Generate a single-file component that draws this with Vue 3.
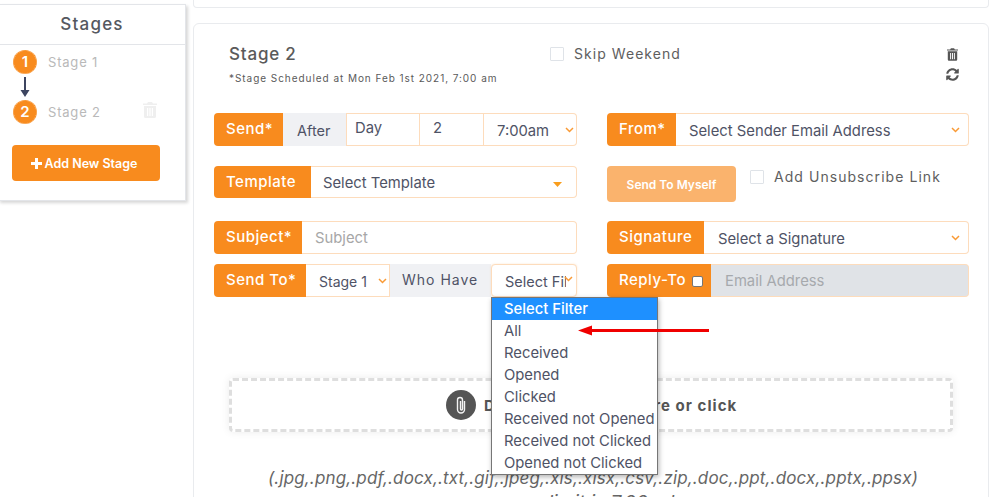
<script setup>
const options = ['Select Filter', 'All', 'Received', 'Opened', 'Clicked', 'Received not Opened', 'Received not Clicked', 'Opened not Clicked']
</script>

<template>
  <div class="page">
    <aside class="sidebar">
      <h2 class="side-title">Stages</h2>
      <div class="stage-list">
        <div class="stage-row">
          <span class="badge">1</span>
          <span class="stage-name">Stage 1</span>
        </div>
        <svg class="down" width="10" height="20" viewBox="0 0 10 20"><path d="M4 0h2v13h3.5L5 20 .5 13H4z" fill="#3d4560"/></svg>
        <div class="stage-row">
          <span class="badge">2</span>
          <span class="stage-name">Stage 2</span>
          <svg class="side-trash" width="14" height="16" viewBox="0 0 14 16"><path d="M5 0h4l1 1.5h4V3H0V1.5h4zM1 4h12v10.5a1.5 1.5 0 0 1-1.5 1.5h-9A1.5 1.5 0 0 1 1 14.500zM4 6v8h1.200V6zm2.400 0v8h1.200V6zm2.400 0v8H10V6z" fill="#efefef" fill-rule="evenodd"/></svg>
        </div>
        <button class="add-btn">
          <svg width="11" height="11" viewBox="0 0 11 11"><path d="M4 0h3v4h4v3H7v4H4V7H0V4h4z" fill="#fff"/></svg>
          Add New Stage
        </button>
      </div>
    </aside>

    <main class="content">
      <div class="top-card"></div>
      <section class="card">
        <header class="card-head">
          <div class="head-left">
            <h3 class="stage-title">Stage 2</h3>
            <p class="schedule">*Stage Scheduled at Mon Feb 1st 2021, 7:00 am</p>
          </div>
          <label class="check skip"><span class="box"></span>Skip Weekend</label>
          <div class="head-icons">
            <svg width="11" height="13" viewBox="0 0 14 16"><path d="M5 0h4l1 1.500h4V3H0V1.500h4zM1 4h12v10.500a1.500 1.500 0 0 1-1.500 1.500h-9A1.500 1.500 0 0 1 1 14.500zM4 6v8h1.200V6zm2.400 0v8h1.200V6zm2.400 0v8H10V6z" fill="#555" fill-rule="evenodd"/></svg>
            <svg width="13" height="13" viewBox="0 0 512 512"><path fill="#555" d="M370.700 133.300C339.500 104 298.900 88 255.800 88c-77.500.1-144.300 53.200-162.800 126.900-1.300 5.400-6.100 9.100-11.600 9.100H24.100c-7.500 0-13.200-6.800-11.800-14.200C33.900 94.900 134.800 8 256 8c66.500 0 126.800 26.200 171.300 68.700L463 41c15.100-15.100 41-4.400 41 17v134c0 13.300-10.700 24-24 24H346c-21.400 0-32.100-25.900-17-41zM32 296h134c21.400 0 32.100 25.900 17 41l-41.700 41.700c31.200 29.300 71.800 45.300 114.900 45.300 77.400-.1 144.300-53.100 162.800-126.800 1.300-5.400 6.100-9.100 11.600-9.100h57.300c7.500 0 13.200 6.800 11.800 14.200C478.100 417.100 377.200 504 256 504c-66.500 0-126.800-26.200-171.300-68.700L49 471c-15.100 15.100-41 4.400-41-17V320c0-13.300 10.700-24 24-24z"/></svg>
          </div>
        </header>

        <div class="form">
          <div class="col">
            <div class="group row-a">
              <span class="label w-send">Send*</span>
              <span class="addon after">After</span>
              <span class="field day">Day</span>
              <span class="field num">2</span>
              <span class="field time">7:00am<svg class="chev" width="9" height="6" viewBox="0 0 9 6"><path d="M1 1l3.500 3.500L8 1" fill="none" stroke="#f99a35" stroke-width="1.500"/></svg></span>
            </div>
            <div class="group row-b short">
              <span class="label w-template">Template</span>
              <span class="field grow pad-12">Select Template<svg class="caret" width="9" height="5" viewBox="0 0 9 5"><path d="M0 0h9L4.500 5z" fill="#f99d1c"/></svg></span>
            </div>
            <div class="group row-c">
              <span class="label w-subject">Subject*</span>
              <span class="field grow placeholder pad-13">Subject</span>
            </div>
            <div class="group row-d">
              <span class="label w-sendto">Send To*</span>
              <span class="field stage-sel">Stage 1<svg class="chev" width="9" height="6" viewBox="0 0 9 6"><path d="M1 1l3.500 3.500L8 1" fill="none" stroke="#f99a35" stroke-width="1.500"/></svg></span>
              <span class="addon who">Who Have</span>
              <div class="filter">
                <span class="filter-text">Select Fil</span>
                <svg class="chev" width="9" height="6" viewBox="0 0 9 6"><path d="M1 1l3.500 3.500L8 1" fill="none" stroke="#f99a35" stroke-width="1.500"/></svg>
                <ul class="menu">
                  <li v-for="(o, i) in options" :key="o" :class="{ active: i === 0 }">{{ o }}</li>
                </ul>
              </div>
            </div>
          </div>

          <div class="col col-right">
            <div class="group row-a">
              <span class="label w-from">From*</span>
              <span class="field grow pad-13 low">Select Sender Email Address<svg class="chev" width="9" height="6" viewBox="0 0 9 6"><path d="M1 1l3.500 3.500L8 1" fill="none" stroke="#f99a35" stroke-width="1.500"/></svg></span>
            </div>
            <div class="myself-row">
              <button class="myself">Send To Myself</button>
              <label class="check unsub"><span class="box"></span>Add Unsubscribe Link</label>
            </div>
            <div class="group row-c">
              <span class="label w-sign">Signature</span>
              <span class="field grow pad-14 low">Select a Signature<svg class="chev" width="9" height="6" viewBox="0 0 9 6"><path d="M1 1l3.500 3.500L8 1" fill="none" stroke="#f99a35" stroke-width="1.500"/></svg></span>
            </div>
            <div class="group row-d">
              <span class="label w-reply">Reply-To<span class="mini-check"></span></span>
              <span class="field grow disabled">Email Address</span>
            </div>
          </div>
        </div>

        <div class="drop">
          <span class="clip">
            <svg width="14" height="20" viewBox="0 0 14 20"><path d="M10.500 6v8.500a3.500 3.500 0 0 1-7 0V5a2.500 2.500 0 0 1 5 0v9a1 1 0 0 1-2 0V6" fill="none" stroke="#f4f4f4" stroke-width="1.400"/></svg>
          </span>
          <span class="drop-text">Drag &amp; Drop a file here or click</span>
        </div>
        <p class="types">(.jpg,.png,.pdf,.docx,.txt,.gif,.jpeg,.xls,.xlsx,.csv,.zip,.doc,.ppt,.docx,.pptx,.ppsx)</p>
        <p class="limit">max limit is 7.00 mb</p>
      </section>
    </main>

    <svg class="red-arrow" width="131" height="11" viewBox="0 0 131 11"><path d="M0 5.500L14 .5V4h117v3H14v3.500z" fill="#f00000"/></svg>
  </div>
</template>

<style>
html, body { margin: 0; background: #fff; overflow: hidden; }
</style>

<style scoped>
* { box-sizing: border-box; }
.page {
  position: relative;
  display: flex;
  align-items: flex-start;
  width: 989px;
  height: 497px;
  overflow: hidden;
  background: #fff;
  font-family: Inter, "Open Sans", sans-serif;
  color: #4f5366;
}
.sidebar {
  flex: none;
  width: 188px;
  height: 197px;
  margin: 4px 0 0 -2px;
  background: #fff;
  border: 1px solid #e3e5e9;
  box-shadow: 2px 2px 3px rgba(0, 0, 0, .16);
}
.side-title {
  margin: 0;
  height: 40px;
  line-height: 39px;
  text-align: center;
  font-size: 17px;
  font-weight: 500;
  letter-spacing: 1.200px;
  color: #55585f;
  border-bottom: 1px solid #e3e5e9;
}
.stage-list { padding: 5px 0 0 14px; display: flex; flex-direction: column; align-items: flex-start; }
.stage-row { display: flex; align-items: center; height: 24px; }
.badge {
  width: 24px;
  height: 24px;
  border-radius: 50%;
  background: #f88b1e;
  border: 1px dotted #fff;
  outline: 1px dotted #f88b1e;
  outline-offset: -1px;
  color: #fff;
  font-size: 15px;
  font-weight: 600;
  line-height: 22px;
  text-align: center;
}
.stage-name { margin-left: 11px; font-size: 13px; letter-spacing: .8px; color: #b9b9b9; }
.down { margin: 3px 0 3px 7px; display: block; }
.side-trash { position: relative; margin-left: 42px; top: -2px; }
.add-btn {
  margin: 21px 0 0 -1px;
  width: 148px;
  height: 36px;
  padding: 0 4px 0 0;
  border: 0;
  border-radius: 4px;
  background: #f88b1e;
  color: #fff;
  font: 600 12.500px Inter, sans-serif;
  display: flex;
  align-items: center;
  justify-content: center;
  gap: 3px;
}
.content { flex: none; width: 796px; margin-left: 7px; display: flex; flex-direction: column; gap: 15px; }
.top-card { height: 8px; border: 1px solid #e9ebee; border-top: 0; border-radius: 0 0 4px 4px; }
.card {
  height: 480px;
  padding: 0 19px 0 20px;
  border: 1px solid #e9ebee;
  border-radius: 6px 6px 0 0;
}
.card-head { position: relative; height: 89px; padding: 20px 0 0 15px; }
.stage-title { margin: 0; font-size: 17px; line-height: 20px; font-weight: 500; letter-spacing: .8px; color: #5a5a5a; }
.schedule { margin: 7px 0 0; font-size: 10px; line-height: 14px; letter-spacing: .95px; color: #5a5a5a; }
.check { display: flex; align-items: center; font-size: 14px; letter-spacing: 1.050px; color: #5e5e5e; }
.box { width: 14px; height: 14px; border: 1px solid #dfe3e8; margin-right: 10px; flex: none; border-radius: 1px; }
.skip { position: absolute; left: 336px; top: 21px; }
.head-icons { position: absolute; right: 10px; top: 24px; display: flex; flex-direction: column; align-items: center; gap: 7px; }
.head-icons svg { display: block; }
.form { display: flex; gap: 30px; }
.col { flex: none; width: 363px; display: flex; flex-direction: column; }
.col-right { width: 362px; }
.group { display: flex; height: 33px; }
.row-b, .myself-row { margin-top: 20px; }
.row-b.short { height: 32px; }
.row-c { margin-top: 23px; }
.myself-row + .row-c { margin-top: 19px; }
.row-d { margin-top: 10px; }
.label {
  flex: none;
  display: flex;
  align-items: center;
  padding-left: 12px;
  padding-bottom: 2px;
  border-radius: 4px 0 0 4px;
  background: #f88b1e;
  color: #fff;
  font-size: 15px;
  font-weight: 500;
  letter-spacing: .5px;
}
.w-send, .w-from { width: 69px; }
.w-template { width: 97px; }
.w-subject { width: 88px; }
.w-sendto { width: 92px; }
.w-sign { width: 97px; }
.w-reply { width: 104px; padding-right: 8px; justify-content: space-between; }
.field {
  position: relative;
  display: flex;
  align-items: center;
  flex: none;
  background: #fff;
  border: 1px solid #fddcbc;
  border-left: 0;
  font-size: 14.800px;
  color: #4f5366;
}
.grow { flex: 1; border-radius: 0 4px 4px 0; }
.pad-12 { padding: 2px 0 0 12px; }
.pad-13 { padding-left: 13px; }
.pad-14 { padding-left: 14px; }
.low { padding-top: 2px; }
.addon { flex: none; display: flex; align-items: center; background: #f0f1f4; font-size: 14.500px; }
.after { width: 64px; padding: 2px 0 0 14px; border-right: 1px solid #fddcbc; }
.day { width: 73px; padding: 0 0 3px 8px; border-right: 1px solid #fddcbc; }
.num { width: 64px; padding: 0 0 3px 13px; border-right: 1px solid #fddcbc; }
.time { flex: 1; padding: 2px 0 0 13px; border-radius: 0 4px 4px 0; }
.chev { position: absolute; right: 2px; top: 13px; }
.row-a .grow .chev, .row-c .grow .chev { right: 8px; }
.caret { position: absolute; right: 14px; top: 15px; }
.placeholder { color: #a7a7a7; }
.stage-sel { width: 84px; padding: 2px 0 0 13px; font-size: 14px; }
.who { width: 101px; padding: 0 0 2px 12px; font-size: 14px; letter-spacing: 1px; }
.filter {
  position: relative;
  flex: 1;
  display: flex;
  align-items: center;
  padding: 2px 0 0 13px;
  background: #fff;
  border: 1px solid #fddcbc;
  border-radius: 4px;
  box-shadow: 0 0 2px rgba(249, 154, 53, .25);
  font-size: 14.500px;
}
.filter-text { width: 61px; overflow: hidden; white-space: nowrap; }
.filter .chev { right: 3px; top: 11px; }
.menu {
  position: absolute;
  z-index: 3;
  left: -1px;
  top: 32px;
  width: 167px;
  margin: 0;
  padding: 0;
  list-style: none;
  background: #fff;
  border: 1px solid #767676;
  box-shadow: 1px 2px 5px rgba(0, 0, 0, .3);
  font-size: 14.800px;
  color: #4f5366;
}
.menu li { height: 22px; line-height: 22px; padding-left: 12px; white-space: nowrap; }
.menu li.active { background: #1e90ff; color: #fff; font-weight: 500; }
.myself-row { display: flex; align-items: flex-start; height: 36px; }
.myself {
  width: 129px;
  height: 36px;
  border: 0;
  border-radius: 4px;
  background: #fab36d;
  color: #fff;
  font: 600 12px Inter, sans-serif;
}
.unsub { margin: 2px 0 0 14px; }
.mini-check {
  width: 11px;
  height: 11px;
  border-radius: 2px;
  background: #fff;
  border: 1px solid #767676;
  margin-top: 3px;
}
.disabled { background: #e0e3e7; padding-left: 14px; color: #a6a9ad; }
.drop {
  display: flex;
  align-items: center;
  width: 724px;
  height: 54px;
  margin: 81px 0 0 15px;
  padding-left: 214px;
  border: 3px dashed #dedede;
  border-radius: 4px;
  box-shadow: 0 0 8px rgba(0, 0, 0, .08);
}
.clip {
  flex: none;
  display: flex;
  align-items: center;
  justify-content: center;
  width: 30px;
  height: 30px;
  border-radius: 50%;
  background: #555;
}
.drop-text { margin-left: 8px; font-size: 15px; font-weight: 700; letter-spacing: 1.050px; color: #555; white-space: nowrap; }
.types {
  margin: 35px 0 0;
  padding-left: 3px;
  text-align: center;
  font-size: 17px;
  line-height: 22px;
  font-style: italic;
  letter-spacing: .15px;
  color: #666;
  white-space: nowrap;
}
.limit { margin: 3px 0 0; padding-left: 3px; text-align: center; font-size: 19px; line-height: 22px; font-style: italic; color: #666; }
.red-arrow { position: absolute; left: 578px; top: 325px; z-index: 5; }
</style>
